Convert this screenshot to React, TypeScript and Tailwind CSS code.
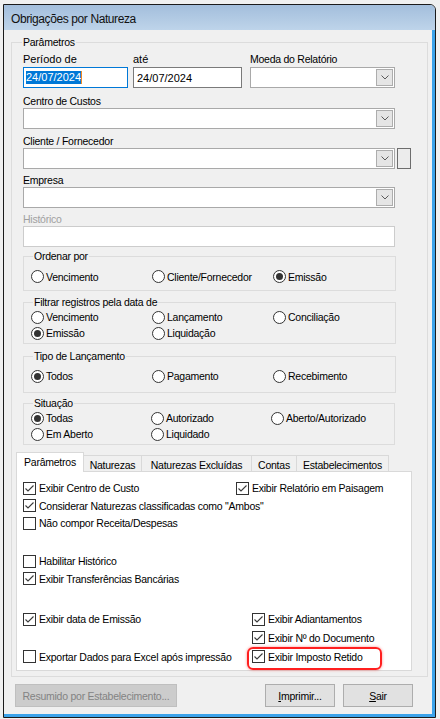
import type { ReactNode } from 'react'

const font = "font-['Liberation_Sans',Arial,sans-serif]"

// ---- small win32-like controls ----

const Radio = ({ checked, label }: { checked?: boolean, label: string }) => (
  <div className="flex items-center gap-[2px] whitespace-nowrap">
    <span className="flex h-[13px] w-[13px] shrink-0 items-center justify-center rounded-full border border-[#333] bg-white">
      { checked && <span className="h-[7px] w-[7px] rounded-full bg-[#333]" /> }
    </span>
    <span>{ label }</span>
  </div>
)

const Checkbox = ({ checked, label, children }: { checked?: boolean, label: string, children?: ReactNode }) => (
  <div className="relative flex items-center gap-[3px] whitespace-nowrap">
    <span className="flex h-[13px] w-[13px] shrink-0 items-center justify-center border border-[#333] bg-white">
      { checked && (
        <svg width="11" height="11" viewBox="0 0 11 11">
          <path d="M1.5 5.5 L4 8 L9.5 2.5" fill="none" stroke="#3a3a3a" strokeWidth="1.1" />
        </svg>
      ) }
    </span>
    <span>{ label }</span>
    { children }
  </div>
)

const GroupBox = ({ label, className, labelLeft = 'left-[9px]', children }: {
  label: string
  className?: string
  labelLeft?: string
  children?: ReactNode
}) => (
  <div className={ `relative border border-[#dcdcdc] ${className ?? ''}` }>
    <span className={ `absolute -top-[7px] ${labelLeft} bg-[#f0f0f0] px-[1px] leading-[12px]` }>{ label }</span>
    { children }
  </div>
)

const Select = ({ className }: { className?: string }) => (
  <div className={ `flex h-[21px] items-center justify-end border border-[#a9a9a9] bg-white pr-[1px] ${className ?? ''}` }>
    <span className="flex h-[17px] w-[17px] items-center justify-center border border-[#adadad] bg-[#e5e5e5]">
      <svg width="8" height="5" viewBox="0 0 8 5">
        <path d="M0.5 0.5 L4 4 L7.5 0.5" fill="none" stroke="#5a5a5a" strokeWidth="1" />
      </svg>
    </span>
  </div>
)

const Label = ({ children, muted }: { children: ReactNode, muted?: boolean }) => (
  <div className={ `mb-[1px] leading-[12px] ${muted ? 'text-[#a0a0a0]' : ''}` }>{ children }</div>
)

const tabs = [
  { name: 'Naturezas', w: 'w-[58px]' },
  { name: 'Naturezas Excluídas', w: 'w-[110px]' },
  { name: 'Contas', w: 'w-[45px]' },
  { name: 'Estabelecimentos', w: 'w-[92px]' },
]

export default function App() {
  return (
    <div className={ `${font} h-[719px] w-[440px] overflow-hidden bg-[#f0f0f0] pl-[3px] pt-[4px] text-[10.5px] leading-[12px] tracking-[-0.25px] text-black` }>
      <div className="flex h-[714px] w-[433px] flex-col overflow-hidden rounded-tr-[6px] border border-[#1b1b1b] bg-[#f0f0f0]">
        {/* title bar */}
        <div className="flex h-[25px] shrink-0 items-center bg-gradient-to-b from-[#a3bedc] to-[#bed4ea] pl-[7px] pt-[2px] text-[12px] tracking-[-0.4px] text-[#111]">
          Obrigações por Natureza
        </div>

        <div className="flex min-h-0 flex-1">
          <div className="flex w-[428px] flex-col">
            <GroupBox label="Parâmetros" labelLeft="left-[10px]" className="ml-[7px] mt-[12px] h-[635px] w-[417px]">
              {/* período / moeda */}
              <div className="ml-[11px] mt-[10px] flex">
                <div className="w-[105px]">
                  <div className="mb-[1px] text-[11px] leading-[13px] tracking-normal">Período de</div>
                  <div className="flex h-[21px] items-center border border-[#0078d7] bg-white pl-[2px] text-[11px] tracking-normal">
                    <span className="bg-[#0078d7] leading-[13px] text-white">24/07/2024</span>
                    <span className="h-[13px] w-[1px] bg-[#f08a24]" />
                  </div>
                </div>
                <div className="ml-[5px] w-[109px]">
                  <div className="mb-[1px] text-[11px] leading-[13px] tracking-normal">até</div>
                  <div className="flex h-[21px] items-center border border-[#7a7a7a] bg-white pl-[3px] text-[11px] tracking-normal">
                    24/07/2024
                  </div>
                </div>
                <div className="ml-[8px] w-[145px]">
                  <div className="mb-[1px] leading-[13px]">Moeda do Relatório</div>
                  <Select />
                </div>
              </div>

              <div className="ml-[11px] mt-[7px]">
                <Label>Centro de Custos</Label>
                <Select className="w-[372px]" />
              </div>

              <div className="ml-[11px] mt-[6px]">
                <Label>Cliente / Fornecedor</Label>
                <div className="flex">
                  <Select className="w-[372px]" />
                  <span className="ml-[2px] h-[21px] w-[14px] border border-[#6d6d6d] bg-[#ececec]" />
                </div>
              </div>

              <div className="ml-[11px] mt-[5px]">
                <Label>Empresa</Label>
                <Select className="w-[372px]" />
              </div>

              <div className="ml-[11px] mt-[5px]">
                <Label muted>Histórico</Label>
                <div className="h-[21px] w-[372px] border border-[#cccccc] bg-white" />
              </div>

              {/* ordenar por */}
              <GroupBox label="Ordenar por" className="ml-[11px] mt-[9px] h-[35px] w-[373px]">
                <div className="grid h-[17px] grid-cols-[121px_121px_1fr] items-center pl-[7px] mt-[11px]">
                  <Radio label="Vencimento" />
                  <Radio label="Cliente/Fornecedor" />
                  <Radio label="Emissão" checked />
                </div>
              </GroupBox>

              <GroupBox label="Filtrar registros pela data de" className="ml-[11px] mt-[11px] h-[42px] w-[373px]">
                <div className="mt-[6px] grid grid-cols-[121px_121px_1fr] grid-rows-[16px_16px] items-center pl-[7px]">
                  <Radio label="Vencimento" />
                  <Radio label="Lançamento" />
                  <Radio label="Conciliação" />
                  <Radio label="Emissão" checked />
                  <Radio label="Liquidação" />
                </div>
              </GroupBox>

              <GroupBox label="Tipo de Lançamento" className="ml-[11px] mt-[12px] h-[37px] w-[373px]">
                <div className="mt-[11px] grid h-[16px] grid-cols-[121px_121px_1fr] items-center pl-[7px]">
                  <Radio label="Todos" checked />
                  <Radio label="Pagamento" />
                  <Radio label="Recebimento" />
                </div>
              </GroupBox>

              <GroupBox label="Situação" className="ml-[11px] mt-[10px] h-[42px] w-[372px]">
                <div className="mt-[6px] grid grid-cols-[120px_120px_1fr] grid-rows-[16px_16px] items-center pl-[7px]">
                  <Radio label="Todas" checked />
                  <Radio label="Autorizado" />
                  <Radio label="Aberto/Autorizado" />
                  <Radio label="Em Aberto" />
                  <Radio label="Liquidado" />
                </div>
              </GroupBox>

              {/* tabs */}
              <div className="ml-[4px] mt-[7px]">
                <div className="flex h-[19px] items-end">
                  <div className="relative z-10 -mb-[1px] flex h-[20px] w-[68px] items-center justify-center border-x border-t border-[#d9d9d9] bg-white pb-[1px]">
                    Parâmetros
                  </div>
                  { tabs.map(t => (
                    <div
                      key={ t.name }
                      className={ `flex h-[16px] ${t.w} items-center justify-center border-r border-t border-[#d9d9d9] bg-[#f0f0f0] pt-[2px]` }
                    >
                      { t.name }
                    </div>
                  )) }
                </div>

                <div className="flex h-[200px] w-[396px] flex-col border border-[#d9d9d9] bg-white pl-[6px] pt-[7px]">
                  <div className="flex h-[18px] items-center">
                    <div className="w-[213px]"><Checkbox checked label="Exibir Centro de Custo" /></div>
                    <Checkbox checked label="Exibir Relatório em Paisagem" />
                  </div>
                  <div className="flex h-[17px] items-center">
                    <Checkbox checked label={ 'Considerar Naturezas classificadas como "Ambos"' } />
                  </div>
                  <div className="flex h-[18px] items-center">
                    <Checkbox label="Não compor Receita/Despesas" />
                  </div>
                  <div className="h-[20px]" />
                  <div className="flex h-[18px] items-center">
                    <Checkbox label="Habilitar Histórico" />
                  </div>
                  <div className="flex h-[17px] items-center">
                    <Checkbox checked label="Exibir Transferências Bancárias" />
                  </div>
                  <div className="h-[23px]" />
                  <div className="flex h-[18px] items-center">
                    <div className="w-[229px]"><Checkbox checked label="Exibir data de Emissão" /></div>
                    <Checkbox checked label="Exibir Adiantamentos" />
                  </div>
                  <div className="flex h-[19px] items-center">
                    <div className="w-[229px]" />
                    <Checkbox checked label="Exibir Nº do Documento" />
                  </div>
                  <div className="flex h-[19px] items-center">
                    <div className="w-[229px]"><Checkbox label="Exportar Dados para Excel após impressão" /></div>
                    <Checkbox checked label="Exibir Imposto Retido">
                      <span className="pointer-events-none absolute -left-[5px] -top-[3px] z-20 h-[23px] w-[135px] rounded-[6px] border-2 border-[#ff1f1f] shadow-[0_0_3px_rgba(255,0,0,0.45)]" />
                    </Checkbox>
                  </div>
                </div>
              </div>
            </GroupBox>

            {/* buttons */}
            <div className="ml-[11px] mt-[7px] flex">
              <div className="flex h-[23px] w-[162px] items-center justify-center border border-[#bfbfbf] bg-[#cccccc] text-[#838383]">
                Resumido por Estabelecimento...
              </div>
              <div className="ml-[88px] flex h-[23px] w-[70px] items-center justify-center border border-[#adadad] bg-[#e1e1e1]">
                <span><span className="underline">I</span>mprimir...</span>
              </div>
              <div className="ml-[8px] flex h-[23px] w-[70px] items-center justify-center border border-[#adadad] bg-[#e1e1e1]">
                <span><span className="underline">S</span>air</span>
              </div>
            </div>
          </div>
          <div className="w-[3px] bg-[#3ca3ea]" />
        </div>
        <div className="h-[3px] shrink-0 bg-[#3ca3ea]" />
      </div>
    </div>
  )
}
